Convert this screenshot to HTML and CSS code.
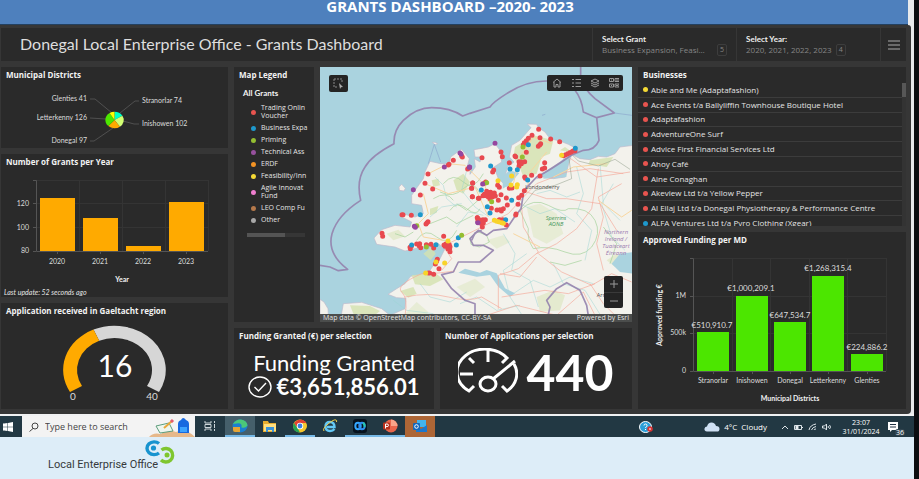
FILE: index.html
```html
<!DOCTYPE html>
<html lang="en">
<head>
<meta charset="utf-8">
<title>Donegal Local Enterprise Office - Grants Dashboard</title>
<link rel="stylesheet" href="styles.css">
</head>
<body>
<div class="slide">
  <div class="banner"><p>GRANTS DASHBOARD –2020- 2023</p></div>
  <main class="dashboard">
    <header class="topbar">
      <h1>Donegal Local Enterprise Office - Grants Dashboard</h1>
      <div class="filter">
        <label for="grant">Select Grant</label>
        <button id="grant" type="button"><span>Business Expansion, Feasi…</span><span class="count">5</span></button>
      </div>
      <div class="filter">
        <label for="year">Select Year:</label>
        <button id="year" class="snug" type="button"><span>2020, 2021, 2022, 2023</span><span class="count">4</span></button>
      </div>
      <button class="menu" type="button" aria-label="Menu">
        <svg width="12" height="12" viewBox="0 0 12 12"><path d="M0 2h12M0 6h12M0 10h12" stroke="#aaa"/></svg>
      </button>
    </header>

    <div class="columns">
      <div class="stack">
        <section class="panel">
          <h2>Municipal Districts</h2>
          <svg class="pie" viewBox="0 0 227 65">
            <path d="M89 16h5l17 14M89 35l16 1M89 58h4l19-13M138 18h-4l-15 12M138 41h-5l-11-3" fill="none" stroke="#606060" stroke-width=".7"/>
            <g transform="translate(113.500 37) scale(9.200 8.200)">
              <path d="M0 0V-1A1 1 0 0 1 .86-.51Z" fill="#00ffc5"/>
              <path d="M0 0L.86-.51A1 1 0 0 1 .59.81Z" fill="#d3ff73"/>
              <path d="M0 0L.59.81A1 1 0 0 1-.67.74Z" fill="#ffaa00"/>
              <path d="M0 0L-.67.74A1 1 0 0 1-.54-.84Z" fill="#4ce600"/>
              <path d="M0 0L-.54-.84A1 1 0 0 1 0-1Z" fill="#ffff00"/>
            </g>
            <g text-anchor="end"><text x="86" y="18">Glenties 41</text><text x="86" y="37">Letterkenny 126</text><text x="86" y="60">Donegal 97</text></g>
            <text x="141" y="20">Stranorlar 74</text><text x="141" y="43">Inishowen 102</text>
          </svg>
        </section>

        <section class="panel">
          <h2>Number of Grants per Year</h2>
          <svg class="years" viewBox="0 0 227 117">
            <path d="M35 10.500H207M35 33.500H207M35 57.500H207M78.500 10V81M121.500 10V81M164.500 10V81M207.500 10V81" stroke="#343434" fill="none"/>
            <path d="M32 10.500h3.500V81.500H207M32 33.500h3M32 57.500h3M32 81.500h3M56.500 81v3M99.500 81v3M142.500 81v3M185.500 81v3" stroke="#555" fill="none"/>
            <path d="M39 28h35v53H39zM82 48h35v33H82zM125 76h35v5h-35zM168 32h35v49h-35z" fill="#ffaa00"/>
            <g text-anchor="end"><text x="28" y="36">120</text><text x="28" y="60">100</text><text x="28" y="83">80</text></g>
            <g text-anchor="middle"><text x="56" y="94">2020</text><text x="99" y="94">2021</text><text x="142" y="94">2022</text><text x="185" y="94">2023</text><text class="strong" x="121" y="112">Year</text></g>
          </svg>
          <p class="updated">Last update: 52 seconds ago</p>
        </section>

        <section class="panel">
          <h2>Application received in Gaeltacht region</h2>
          <svg class="gauge" viewBox="0 0 227 90">
            <path d="M92.500 10.500A51.500 44.300 0 0 1 158 73L146 67A37.500 32 0 0 0 98.200 21.800Z" fill="#d6d6d6"/>
            <path d="M69 73A51.500 44.300 0 0 1 92.500 10.500L98.200 21.800A37.500 32 0 0 0 81 67Z" fill="#ffaa00"/>
            <g text-anchor="middle"><text class="value" x="114" y="58">16</text><text class="limit" x="72" y="81">0</text><text class="limit" x="151" y="81">40</text></g>
          </svg>
        </section>
      </div>

      <div class="stack middle">
        <div class="map-row">
          <section class="panel legend">
            <h2>Map Legend</h2>
            <h3>All Grants</h3>
            <ul>
              <li><i class="dot red"></i><span>Trading Onlin<br>Voucher</span></li>
              <li><i class="dot blue"></i><span>Business Expa</span></li>
              <li><i class="dot green"></i><span>Priming</span></li>
              <li><i class="dot purple"></i><span>Technical Ass</span></li>
              <li><i class="dot orange"></i><span>ERDF</span></li>
              <li><i class="dot yellow"></i><span>Feasibility/Inn</span></li>
              <li><i class="dot pink"></i><span>Agile Innovat<br>Fund</span></li>
              <li><i class="dot brown"></i><span>LEO Comp Fu</span></li>
              <li><i class="dot grey"></i><span>Other</span></li>
            </ul>
            <div class="track"><div class="thumb"></div></div>
          </section>

          <section class="map" aria-label="Map of grants">
            <svg class="chart" viewBox="0 0 936 765" preserveAspectRatio="xMidYMid slice">
              <rect width="936" height="765" fill="#aad3df"/>
              <!-- land -->
              <g fill="#f3f2ec" stroke="#c0b9cb" stroke-width="2">
                <path d="M940 235L900 240 885 260 860 270 835 268 810 278 780 275 755 262 745 295 736 330 700 335 665 330 650 335 690 305 740 272 770 245 745 232 720 222 690 215 675 195 655 182 650 172 622 171 633 182 600 220 575 235 568 270 582 285 562 300 555 330 575 350 560 358 535 335 522 300 545 285 540 250 525 230 505 240 480 245 462 248 465 270 485 270 480 285 463 275 466 300 450 322 450 300 440 305 448 275 425 247 410 257 392 270 388 290 362 290 330 283 315 315 310 335 292 360 275 385 275 410 305 415 310 440 285 450 250 441 238 446 275 465 270 480 225 475 185 488 162 513 170 532 225 540 255 552 305 540 355 530 375 545 360 575 340 595 330 610 315 620 272 628 255 650 230 665 204 682 230 692 258 694 255 725 210 745 185 725 125 706 70 710 60 765H940Z"/>
                <path d="M0 697L12 705 24 725 26 765H0ZM237 360L245 352 256 364 252 372 238 370ZM337 226h8l8 4-8 3Z"/>
              </g>
              <!-- uplands, woods and parks -->
              <g fill="#d5e3b0" opacity=".8">
                <path d="M585 240L640 205 700 220 690 260 665 270 650 320 610 330 595 290 580 270ZM735 240L760 258 720 250ZM330 425l25-8-5 20-20 8zM335 340l20-5 5 20-20 5zM275 625l70-8 25 20-40 20-45-5zM240 672l40-12 10 20-25 12zM90 715l60 2 30 15-25 20-55-12zM400 340l30-20 20 25-20 35-20-10zM310 560l25-20 12 20-15 20zM810 280l70-10-20 30-55-8z"/>
                <path d="M240 755l50-50 35 30-20 30zM410 660l55-25 30 25-45 30zM500 520l50-15 20 20-40 20zM620 420l40-10 50 30 20 60-50 30-40-20z" opacity=".45"/>
                <path d="M650 690l50-20 35 15-15 45-60 5zM860 580l30-20 20 20-25 20zM200 500l35-12 20 20-35 12z" opacity=".6"/>
              </g>
              <g fill="none" stroke="#a6d39c" stroke-width="3" opacity=".7">
                <path d="M370 350q30-35 60-5t60-25M360 375q40 20 70-10t50 15M340 395q40-25 60 5M290 520q25-40 60-10t60-20M390 430q20-30 50-5t40 0M410 410l30 20 40-35M330 470l50-20 30 20 50-25M225 500l30 10 25-15M600 430q40-40 85-15t60 10q60-5 80 35t-10 80q-30 35-80 15t-95-10q-20-30-15-60ZM450 515l20-22 30 12 8 20-30 15-25-8ZM690 585l45 10 50-15M850 480l40 50-20 60"/>
              </g>
              <g fill="none" stroke="#9bd4d2" stroke-width="2" opacity=".75">
                <path d="M345 330l25 25 10 40 30 25M440 310l-15 60 40 50 35 25M330 450l35-30 60-10M410 480l35-45 45 10M300 650l30 40 60 15 50-30M220 700l40 30 80 10M550 500l35 60-10 50 55 30 25 80M620 560l-70 50 20 80 40 60M600 410l60 30 45-15 60 40M770 300l20 80-20 60 45 50-20 90M840 290l10 120 50 50M700 590l30 60 65 20 50 80M880 350l-35 60 30 100 40 40M580 680l60-40 50 20 60-30 70 20M420 710l50-20 60 40 70-15M650 380l40-10 50 20 40-15"/>
              </g>
              <!-- lakes and sea loughs -->
              <path d="M875 590l25-30 40-5v65l-40-5zM415 617l20-12 45 12 20-8 30 10 25 45 30 15-15 10-35-30-25-35-40 5zM548 330l20-20 30 8-30 35-20 12zM365 538l25-6-8 12zM730 275l15-5-6 60-70 5 25-20z" fill="#aad3df"/>
              <!-- roads -->
              <g fill="none" stroke="#f5a99a" stroke-width="2">
                <path d="M255 745q10-50-10-70t60-55l50-2 50-6M255 690q70-15 130 0t100 0l60 35M375 545l20 30-30 35M385 530l50-25 60-30 70-35 55-60 30-30 90-35 70-10 100 15M620 375l60 20 60 0 100 15 50 80M605 420l5 60 45 75-60 50-60 20v100M650 560l60-30 60-45 45-60 20-120M655 560l70 55 90 40 60-35 60 25M540 620l60 10 50-60M545 690l130-20 70 10 80-30M500 745l90-30 120 30 80-70 45 90M810 650l40 60 50 50M850 610l-20-80 20-80-15-60 70-40M745 270l85 60 100-15"/>
              </g>
              <g fill="none" stroke="#f8d6a0" stroke-width="3">
                <path d="M310 380l15 60-30 30 15 40 60 10M325 320l60-30 50 5 60 60 10 50M315 350l70 30 80-20 40 90M580 350l20-80 40-60 55 20M620 375l10-60 50-60M580 500l80 40M835 400l70 50 30-20M700 330l60-30 100-10"/>
              </g>
              <path d="M755 262l20 20 60 15 50-20 45 30M605 420l40-50 60-15 50-20-8-60" fill="none" stroke="#8c9b86" stroke-width="1.500"/>
              <!-- maritime and land borders -->
              <g fill="none" stroke="#9583ae" stroke-width="5" stroke-linejoin="round" opacity=".9">
                <path d="M0 595L30 600 55 611 83 607Q20 560 36 500 52 445 122 400 108 340 135 300 155 265 222 230 220 190 250 160 290 122 335 122 390 122 428 147L450 139 510 120Q520 105 560 80 620 40 685 42 740 44 765 70 785 95 790 135L830 152 837 220Q825 250 790 250L755 264Q690 310 650 330L612 370 603 425 582 452 560 485 520 490 500 505 475 490 450 515 460 535 490 535 520 550 480 585 415 585 400 615 365 623 395 665 435 700 465 710V765"/>
                <path d="M782 0V30Q790 65 825 95L883 138 830 152M680 765L690 720 680 700 710 665 740 647 780 670 800 715 808 765M455 520l10-22 20-8"/>
              </g>
              <path d="M883 138L936 145M325 290L343 232 362 285M666 145l10-3" fill="none" stroke="#8da7cd" stroke-width="2"/>
              <g class="labels">
                <text class="town" x="667" y="367">Londonderry</text>
                <text class="town" x="847" y="691">Arm</text>
                <text class="park" x="708" y="459">Sperrins</text><text class="park" x="708" y="477">AONB</text>
                <text class="region" x="888" y="502">Northern</text><text class="region" x="888" y="523">Ireland /</text><text class="region" x="888" y="544">Tuaisceart</text><text class="region" x="888" y="565">Éireann</text>
              </g>
              <!-- one zero-length stroke per grant -->
              <g fill="none" stroke-width="15" stroke-linecap="round">
                <g transform="translate(-15 -15)">
                  <path stroke="#e8494f" d="M339 336h0M330 364h0M353 381h0M316 399h0M400 309h0M402 307h0M415 295h0M442 285h0M440 282h0M458 321h0M463 317h0M473 363h0M470 379h0M472 404h0M490 409h0M264 458h0M261 458h0M289 460h0M333 486h0M339 479h0M336 482h0M201 514h0M203 523h0M285 556h0M286 560h0M289 553h0M305 546h0M314 545h0M313 552h0M317 557h0M334 548h0M348 547h0M356 558h0M386 523h0M387 549h0M392 546h0M398 553h0M403 548h0M399 561h0M405 569h0M404 560h0M390 553h0M405 554h0M367 592h0M361 606h0M365 598h0M372 620h0M340 633h0M344 633h0M356 637h0M487 467h0"/>
                  <path stroke="#1e98cc" d="M316 458h0M290 549h0M363 548h0M424 549h0M430 527h0"/>
                  <path stroke="#94be32" d="M440 520h0M305 491h0M334 555h0"/>
                  <path stroke="#97469e" d="M295 383h0M388 315h0M435 273h0M438 276h0M464 315h0M298 493h0M301 496h0M488 481h0"/>
                  <path stroke="#f8d329" d="M399 537h0M389 603h0M363 600h0M332 633h0"/>
                </g>
                <g transform="translate(450 -15)">
                  <path stroke="#e8494f" d="M206 202h0M186 220h0M175 229h0M169 236h0M163 242h0M160 248h0M210 227h0M212 245h0M209 249h0M205 253h0M242 231h0M269 239h0M281 281h0M287 278h0M293 275h0M299 272h0M304 270h0M309 267h0M315 266h0M169 271h0M93 270h0M97 284h0M36 287h0M135 282h0M137 284h0M147 299h0M153 299h0M164 299h0M148 306h0M154 305h0M147 313h0M118 302h0M224 302h0M217 321h0M224 318h0M71 324h0M68 330h0M185 340h0M210 342h0M164 345h0M166 349h0M8 363h0M5 379h0M7 404h0M27 409h0M47 360h0M43 364h0M83 370h0M88 376h0M118 379h0M126 378h0M163 386h0M155 400h0M146 407h0M144 427h0M109 408h0M93 398h0M85 415h0M76 402h0M73 393h0M68 398h0M62 391h0M56 391h0M50 388h0M43 397h0M49 401h0M55 405h0M60 410h0M67 405h0M39 401h0M54 396h0M62 400h0M112 429h0M64 439h0M81 444h0M90 443h0M94 447h0M100 440h0M138 456h0M137 459h0M22 467h0M24 474h0M32 474h0M39 473h0M46 473h0M35 480h0M40 483h0M36 488h0M37 495h0M88 473h0M98 473h0M109 489h0"/>
                  <path stroke="#1e98cc" d="M175 248h0M316 259h0M62 312h0M120 321h0M142 323h0M173 354h0M34 384h0M125 415h0M52 434h0M60 453h0M107 473h0"/>
                  <path stroke="#94be32" d="M159 255h0M157 285h0M65 419h0M50 362h0"/>
                  <path stroke="#97469e" d="M75 244h0M38 366h0M-2 316h0M24 482h0"/>
                  <path stroke="#f8d329" d="M125 342h0M84 356h0M123 369h0M142 368h0M140 375h0M73 475h0M80 478h0M86 479h0M95 482h0M100 484h0M275 280h0"/>
                </g>
              </g>
            </svg>
            <button class="tool select-tool" type="button" aria-label="Select">
              <svg width="11" height="11" viewBox="0 0 11 11" fill="none"><path d="M1 1h8v4M1 1v8h4" stroke="#888" stroke-dasharray="2 1"/><path d="M6 5l4 4-2 .2L7 11Z" fill="#aaa"/></svg>
            </button>
            <div class="tool toolbar">
              <button type="button" aria-label="Home"><svg width="10" height="10" viewBox="0 0 10 10"><path d="M1 4.500L5 1l4 3.500M2 4v5h2V6.500h2V9h2V4"/></svg></button>
              <button type="button" aria-label="Legend"><svg width="10" height="10" viewBox="0 0 10 10"><path d="M1 1.500h2M1 5h2M1 8.500h2M4.500 1.500H10M4.500 5H10M4.500 8.500H10"/></svg></button>
              <button type="button" aria-label="Layers"><svg width="10" height="10" viewBox="0 0 10 10"><path d="M5 1l4 2-4 2-4-2ZM1 5l4 2 4-2M1 7l4 2 4-2"/></svg></button>
              <button type="button" aria-label="Basemaps"><svg width="10" height="10" viewBox="0 0 10 10"><path d="M.5.5h4v3h-4zM6 .5h4v3H6zM.5 6h4v3h-4zM6 6h4v3H6zM2 2h1M7 2h2M2 7.500h1M7 7.500h2"/></svg></button>
            </div>
            <div class="tool zoom">
              <button type="button" aria-label="Zoom in"><svg width="10" height="10" viewBox="0 0 10 10"><path d="M5 1v8M1 5h8"/></svg></button>
              <button type="button" aria-label="Zoom out"><svg width="10" height="10" viewBox="0 0 10 10"><path d="M1 5h8"/></svg></button>
            </div>
            <div class="credit"><span>Map data © OpenStreetMap contributors, CC-BY-SA</span><span>Powered by Esri</span></div>
          </section>
        </div>

        <div class="figures">
          <section class="panel">
            <h2>Funding Granted (€) per selection</h2>
            <div class="funding">
              <p>Funding Granted</p>
              <div class="amount">
                <svg width="24" height="22" viewBox="0 0 24 22" fill="none" stroke="#fff" stroke-width="1.400"><ellipse cx="12" cy="11" rx="11" ry="10"/><path d="M6.500 11l4 4 7.500-8"/></svg>
                <strong>€3,651,856.01</strong>
              </div>
            </div>
          </section>
          <section class="panel">
            <h2>Number of Applications per selection</h2>
            <div class="applications">
              <svg width="60" height="48" viewBox="0 0 60 48" fill="none" stroke="#fff" stroke-width="3">
                <path d="M50 11A28 23 0 1 0 11 43L16 38M56 16A26 22 0 0 1 49 43L44 38M30 2v12M11 10l5 5M49 10l-5 5M2 26h13M35 31L57 13"/>
                <ellipse cx="30" cy="36" rx="8" ry="7"/>
              </svg>
              <strong>440</strong>
            </div>
          </section>
        </div>
      </div>

      <div class="stack">
        <section class="panel">
          <h2>Businesses</h2>
          <div class="scroller">
            <ul class="businesses">
              <li><i class="dot yellow"></i>Able and Me (Adaptafashion)</li>
              <li><i class="dot red"></i>Ace Events t/a Ballyliffin Townhouse Boutique Hotel</li>
              <li><i class="dot red"></i>Adaptafashion</li>
              <li><i class="dot red"></i>AdventureOne Surf</li>
              <li><i class="dot red"></i>Advice First Financial Services Ltd</li>
              <li><i class="dot red"></i>Ahoy Café</li>
              <li><i class="dot red"></i>Aine Conaghan</li>
              <li><i class="dot red"></i>Akeview Ltd t/a Yellow Pepper</li>
              <li><i class="dot red"></i>Al Eilaj Ltd t/a Donegal Physiotherapy &amp; Performance Centre</li>
              <li><i class="dot blue"></i>ALFA Ventures Ltd t/a Pyro Clothing (Xgear)</li>
            </ul>
            <div class="rail"><div></div></div>
          </div>
        </section>

        <section class="panel">
          <h2>Approved Funding per MD</h2>
          <svg class="districts" viewBox="0 0 268 161">
            <path d="M56 10.500H248M56 48.500H248M56 85.500H248M94.500 10V123M132.500 10V123M171.500 10V123M209.500 10V123M248.500 10V123" stroke="#343434" fill="none"/>
            <path d="M52 10.500h3.500V123.500H248M52 48.500h3M52 85.500h3M52 123.500h3M75.500 123v3M114.500 123v3M152.500 123v3M190.500 123v3M229.500 123v3" stroke="#555" fill="none"/>
            <path d="M59 84h32v39H59zM98 48h32v75H98zM136 74h32v49h-32zM174 28h32v95h-32zM213 106h32v17h-32z" fill="#4ce600"/>
            <g text-anchor="end"><text x="48" y="50">1M</text><text x="48" y="87">500k</text><text x="48" y="125">0</text></g>
            <g text-anchor="middle">
              <g class="amounts"><text x="74" y="80">€510,910.7</text><text x="113" y="43">€1,000,209.1</text><text x="152" y="70">€647,534.7</text><text x="190" y="23">€1,268,315.4</text><text x="229" y="102">€224,886.2</text></g>
              <text x="75" y="135">Stranorlar</text><text x="114" y="135">Inishowen</text><text x="152" y="135">Donegal</text><text x="190" y="135">Letterkenny</text><text x="229" y="135">Glenties</text>
              <text class="strong" x="152" y="153">Municipal Districts</text>
              <text class="strong" transform="translate(24 67) rotate(-90)">Approved funding €</text>
            </g>
          </svg>
        </section>
      </div>
    </div>
  </main>

  <nav class="taskbar" aria-label="Taskbar">
    <button class="start" type="button" aria-label="Start"><svg width="10" height="10" viewBox="0 0 10 10"><path d="M0 1.500L4.500 1v3.700H0zM5 .9L10 0v4.700H5zM0 5.300h4.500V9L0 8.500zM5 5.300h5V10l-5-.9z" fill="#fff"/></svg></button>
    <div class="search">
      <svg width="10" height="10" viewBox="0 0 10 10" fill="none" stroke="#444"><circle cx="6" cy="4" r="3"/><path d="M4 6.500L.5 9.500"/></svg>
      <input type="text" placeholder="Type here to search" aria-label="Type here to search">
      <svg width="46" height="21" viewBox="0 0 46 21"><path d="M0 21q4-5 12-3 7-6 15-2 10-4 19 5z" fill="#e6b88a"/><path d="M7 10l13-3 4 8-13 2z" fill="#eef6ee" stroke="#5c9d7c"/><path d="M15 12l8-7" stroke="#e9a83a" stroke-width="2"/><path d="M22 6l2-2" stroke="#e45c6e" stroke-width="3"/><path d="M29 17V8q0-3 3-4 2-4 5 0 3 1 3 4v9z" fill="#1769e0"/><path d="M31 11h7v5h-7z" fill="#3ba3ff"/></svg>
    </div>
    <div class="apps">
      <button type="button" aria-label="Task view"><svg viewBox="0 0 16 14" fill="none" stroke="#ccd6da"><path d="M3 2v2h6V2M3 12v-2h6v2M3 5.500h6v3H3zM12.500 2v2M12.500 5v4M12.500 10v2"/></svg></button>
      <button class="active" type="button" aria-label="Edge"><svg viewBox="0 0 16 14"><ellipse cx="8" cy="7" rx="7.500" ry="6.500" fill="#1b7fd0"/><path d="M1 5Q4 0 9 .5q6 1 6.500 6-2 3-6 2 1-5-5-4z" fill="#4bc779"/><path d="M1 8h7v5H3q-2 0-2-2z" fill="#e5a536"/></svg></button>
      <button type="button" aria-label="File Explorer"><svg viewBox="0 0 16 14"><path d="M1 2h5l1 2h7v9H1z" fill="#e8ad2f"/><path d="M2 5h12v7H2z" fill="#ffdf80"/><path d="M4 8h8v5h-2v-2H6v2H4z" fill="#3b93d8"/></svg></button>
      <button class="open" type="button" aria-label="Chrome"><svg viewBox="0 0 16 14"><ellipse cx="8" cy="7" rx="7" ry="6.500" fill="#f5c52c"/><path d="M2 4Q5 .5 8 .5q4 0 6.500 3.500H8L5 8z" fill="#e34133"/><path d="M2 4l4 6 2 3.500Q1 13 1 7q0-2 1-3z" fill="#27a153"/><circle cx="8" cy="7" r="3.200" fill="#fff"/><circle cx="8" cy="7" r="2.400" fill="#3c7de0"/></svg></button>
      <button type="button" aria-label="Internet Explorer"><svg viewBox="0 0 16 14" fill="none"><path d="M12.500 10Q11 12 8 12 3.500 12 3.500 7.500T8 3q4.500 0 4.500 5H5" stroke="#64c9f5" stroke-width="2.400"/><path d="M2 12q-2-2 4-7t8-4q1 0 .5 2" stroke="#f1cf4a"/></svg></button>
      <button class="open" type="button" aria-label="Webex"><svg viewBox="0 0 16 14" fill="none" stroke-width="2"><rect x="1" width="14" height="14" rx="3" fill="#06121e"/><ellipse cx="6" cy="7" rx="2.700" ry="3.200" stroke="#33a7ff"/><ellipse cx="10" cy="7" rx="2.700" ry="3.200" stroke="#2f8df0"/><path d="M11 4q2 1 1.500 4" stroke="#28c9ad"/></svg></button>
      <button class="open" type="button" aria-label="PowerPoint"><svg viewBox="0 0 16 14"><ellipse cx="9" cy="7" rx="6.500" ry="6.500" fill="#e8664c"/><path d="M9 .5a6.500 6.500 0 0 1 6.500 6.500H9z" fill="#f7a48a"/><rect x="1" y="3.500" width="7" height="7" rx="1" fill="#b9301c"/><path d="M3.500 9.500V5h1.500q1.500 0 1.500 1.300T5 7.600H3.500" fill="none" stroke="#fff"/></svg></button>
      <button class="alert" type="button" aria-label="Outlook"><svg viewBox="0 0 16 14"><path d="M5 1h9v7H5z" fill="#42b4ef"/><path d="M4 6l5 4 6-4v7H4z" fill="#1c77cc"/><rect x="1" y="4" width="7" height="7" rx="1" fill="#1368bd"/><circle cx="4.500" cy="7.500" r="1.800" fill="none" stroke="#fff"/></svg></button>
    </div>
    <button class="help" type="button" aria-label="Help"><svg width="14" height="12" viewBox="0 0 14 12"><ellipse cx="6.500" cy="6" rx="6" ry="5.500" fill="#2a9fd9" stroke="#fff"/><path d="M5 4.500q0-1.500 1.500-1.500T8 4.500 6.500 6.500V7M6.500 8v1" fill="none" stroke="#fff"/><circle cx="11" cy="8" r="2.800" fill="#d93333"/><path d="M10 8h2" stroke="#fff"/></svg></button>
    <div class="weather"><svg width="16" height="10" viewBox="0 0 16 10"><path d="M3 9.500Q0 9 .5 6.500 1 4.500 3 4.500 4 .5 7.500.5T12 4q3.500 0 3.500 3T12 9.500z" fill="#cfe0f3"/></svg><span>4°C&nbsp; Cloudy</span></div>
    <div class="tray">
      <svg width="8" height="8" viewBox="0 0 8 8"><path d="M1 6l3-3 3 3"/></svg>
      <svg width="9" height="8" viewBox="0 0 9 8"><path d="M.5 2.500h7v4h-7zM8.500 4v1"/><path d="M2 3v3h2V3z" fill="#fff"/></svg>
      <svg width="9" height="8" viewBox="0 0 9 8"><path d="M1 7Q2 2 8 1M3.500 7q1-3 4.500-3.500M6 7q0-1 2-1"/></svg>
      <svg width="10" height="8" viewBox="0 0 10 8"><path d="M.5 3h2l2-2v6l-2-2h-2zM6 3q1 1 0 2M7.500 2q2 2 0 4"/></svg>
    </div>
    <div class="clock"><time>23:07</time><span>31/01/2024</span></div>
    <button class="notify" type="button" aria-label="36 notifications"><svg width="10" height="10" viewBox="0 0 10 10"><path d="M0 0h10v8H4L2 10V8H0z" fill="#fff"/><path d="M2 2.500h6M2 5h6" stroke="#234"/></svg><span>36</span></button>
  </nav>

  <footer class="brand">
    <span>Local Enterprise Office</span>
    <svg width="30" height="24" viewBox="0 0 30 24" fill="none" stroke-width="3.400"><path d="M14 3.500A7.200 6.400 0 1 0 14 13" stroke="#1793cf"/><circle cx="8.500" cy="8" r="2.600" fill="#1793cf"/><path d="M16.500 10A6.800 6.800 0 1 1 16 20" stroke="#7fc62f"/><circle cx="22" cy="15" r="2.500" fill="#7fc62f"/></svg>
  </footer>
</div>
<div class="scroll-edge"></div>
</body>
</html>
```
FILE: styles.css
```css
* { box-sizing: border-box; margin: 0; padding: 0; }
body {
  display: flex;
  min-height: 100vh;
  background: #0b0d10;
  color: #e4e4e4;
  font: 8px/10px "Open Sans", Lato, sans-serif;
}
button { border: 0; background: none; color: inherit; font: inherit; }
ul { list-style: none; }
svg { display: block; }
.slide { flex: 1; min-width: 0; display: flex; flex-direction: column; background: #e8eaec; }
.scroll-edge { width: 5px; background: #0b0d10; }

.banner { height: 25px; margin-right: 6px; background: #4e80bd; border-bottom: 1px solid #23405f; text-align: center; color: #fff; }
.banner p { font: bold 15px/12px "Open Sans", sans-serif; padding-right: 8px; }

.dashboard { margin-right: 3px; padding: 3px 5px 5px 1px; background: #363636; border-radius: 0 3px 4px 0; }
.topbar { display: flex; height: 33px; background: #2a2a2a; }
.topbar h1 { flex: 1; padding-left: 19px; font: 16px/32px Lato, sans-serif; color: #dedede; white-space: nowrap; }
.filter { width: 144px; padding: 6px 9px; border-left: 1px solid #363636; }
.filter label { display: block; font-family: Lato, sans-serif; font-weight: bold; color: #eee; }
.filter button { display: flex; justify-content: space-between; width: 100%; color: #868686; line-height: 12px; white-space: nowrap; }
.filter .snug { justify-content: flex-start; gap: 4px; }
.count { padding: 0 2px; border: 1px solid #3d3d3d; border-radius: 2px; font-size: 7px; line-height: 9px; }
.menu { width: 26px; padding-left: 7px; border-left: 1px solid #363636; }

.columns { display: grid; grid-template-columns: 227fr 398fr 268fr; gap: 6px; padding-top: 6px; }
.stack { display: flex; flex-direction: column; gap: 6px; min-width: 0; }
.panel { min-width: 0; background: #2a2a2a; overflow: hidden; }
.panel h2 { height: 16px; padding-left: 5px; font: bold 8px/15px "Open Sans", sans-serif; color: #f2f2f2; white-space: nowrap; }
.panel > svg { width: 100%; }
.pie, .years, .gauge, .districts { font-family: Lato, sans-serif; font-size: 7px; fill: #dcdcdc; }
.pie { height: 65px; }
.years { height: 117px; }
.gauge { height: 90px; }
.districts { height: 161px; }
.amounts { font-size: 8px; }
.strong { font-weight: bold; fill: #f2f2f2; }
.value { font-size: 30px; fill: #fff; }
.limit { font-size: 10px; }
.updated { padding-left: 3px; font-family: Lato, sans-serif; font-size: 7px; font-style: italic; }

.map-row { display: flex; gap: 6px; height: 255px; }
.legend { width: 80px; padding-right: 6px; }
.legend h3 { padding: 5px 0 4px 9px; font-family: Lato, sans-serif; font-size: 8px; line-height: 10px; color: #f2f2f2; }
.legend li { display: flex; align-items: center; gap: 5px; padding: 2px 0 2px 17px; line-height: 8px; font-size: 7px; white-space: nowrap; }
.dot { flex: none; width: 5px; height: 5px; border-radius: 50%; }
.red { background: #e8544f; }
.blue { background: #1e98cc; }
.green { background: #94be32; }
.purple { background: #97519e; }
.orange { background: #f39324; }
.yellow { background: #f5da35; }
.pink { background: #f07fd0; }
.brown { background: #b5794b; }
.grey { background: #a8a8a8; }
.track { height: 4px; margin: 7px 3px 0 13px; background: #363636; }
.thumb { width: 66%; height: 4px; background: #545454; }

.map { position: relative; flex: 1; min-width: 0; overflow: hidden; }
.chart { width: 100%; height: 100%; font-family: "Open Sans", sans-serif; text-anchor: middle; }
.town { font-size: 17px; fill: #4c4c4c; }
.park { font-size: 17px; font-style: italic; fill: #43965a; }
.region { font-size: 18px; font-style: italic; fill: #9a78ae; }
.tool { position: absolute; background: #242424; border-radius: 2px; }
.tool button { display: grid; place-items: center; width: 19px; height: 16px; }
.tool svg { fill: none; stroke: #999; stroke-width: 1px; }
.select-tool { display: grid; place-items: center; top: 8px; left: 9px; width: 19px; height: 17px; }
.select-tool svg { stroke: none; }
.toolbar { top: 8px; right: 9px; display: flex; }
.zoom { right: 9px; bottom: 14px; }
.zoom button + button { border-top: 1px solid #3a3a3a; }
.credit { position: absolute; inset: auto 0 0; display: flex; justify-content: space-between; padding: 0 3px; background: #4b4d4c; line-height: 8px; font-size: 7px; }

.figures { display: grid; grid-template-columns: 200fr 192fr; gap: 6px; height: 81px; color: #fff; font-family: Lato, sans-serif; }
.funding { display: flex; flex-direction: column; align-items: center; padding-top: 7px; }
.funding p { font-size: 22px; line-height: 24px; }
.amount { display: flex; align-items: center; gap: 4px; }
.amount strong { font-size: 22px; line-height: 24px; }
.applications { display: flex; justify-content: center; align-items: center; gap: 8px; padding-top: 4px; }
.applications strong { font-size: 50px; line-height: 48px; }

.scroller { display: flex; height: 143px; overflow: hidden; }
.businesses { flex: 1; display: grid; grid-auto-rows: 1fr; height: 148px; }
.businesses li { display: flex; align-items: center; gap: 3px; padding-left: 5px; border-bottom: 1px solid #3c3c3c; white-space: nowrap; }
.rail { width: 4px; height: 143px; background: #333; }
.rail div { height: 14px; background: #575757; }

.taskbar { display: flex; align-items: stretch; height: 23px; border-top: 2px solid #f0f1f2; background: #223843; color: #fff; }
.start { width: 22px; padding-left: 3px; }
.search { display: flex; align-items: center; width: 173px; padding-left: 7px; background: #f3f3f3; }
.search input { flex: 1; min-width: 0; padding-left: 6px; border: 0; background: none; font: 9px/12px "Open Sans", sans-serif; }
.search input::placeholder { color: #444; opacity: 1; }
.apps { display: flex; }
.apps button { display: grid; place-items: center; width: 30px; border-bottom: 2px solid transparent; }
.apps svg { width: 16px; height: 14px; }
.apps .open { border-color: #76b9e7; }
.apps .active { background: #455f6b; border-color: #76b9e7; }
.apps .alert { background: #ad6636; }
.help { margin-left: auto; }
.weather { display: flex; align-items: center; gap: 4px; margin-left: 51px; }
.tray { display: flex; align-items: center; gap: 5px; margin-left: 14px; }
.tray svg { fill: none; stroke: #dde4e8; }
.clock { display: flex; flex-direction: column; justify-content: center; align-items: center; width: 46px; margin-left: 6px; font-size: 7px; line-height: 9px; }
.notify { position: relative; width: 30px; padding-left: 4px; }
.notify span { position: absolute; right: 9px; bottom: 1px; padding: 0 1px; border-radius: 3px; background: #31444f; font-size: 7px; line-height: 7px; }

.brand { flex: 1; display: flex; align-items: flex-start; padding: 3px 0 0 48px; background: #ddedf8; color: #36393c; }
.brand span { padding-top: 17px; font: 11px/16px Roboto, sans-serif; }
.brand svg { margin-left: -13px; }
```
